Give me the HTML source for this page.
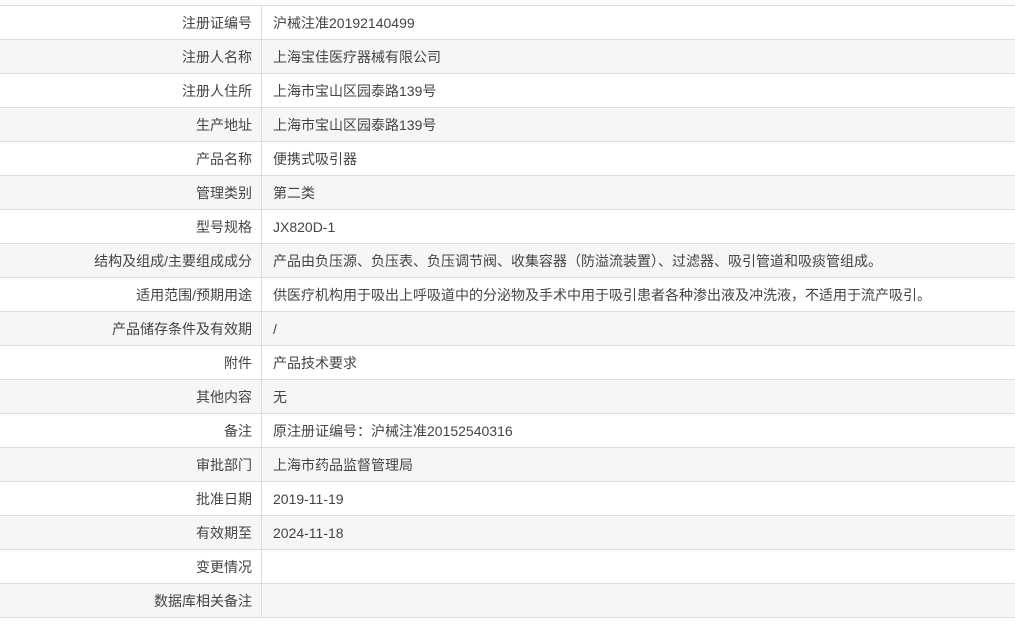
<!DOCTYPE html>
<html><head><meta charset="utf-8"><style>
body{margin:0;background:#fff;font-family:"Liberation Sans","Noto Sans CJK SC",sans-serif;font-size:14px;color:#444;}
table{position:absolute;left:0;top:5px;width:1015px;border-collapse:collapse;}
td{height:33px;border-top:1px solid #ddd;border-bottom:1px solid #ddd;padding:0;}
td.l{width:252px;text-align:right;padding-right:9px;border-right:1px solid #ddd;}
td.v{padding-left:11px;}
tr:nth-child(even) td{background:#f6f6f6;}
</style></head><body>
<table>
<tr><td class="l">注册证编号</td><td class="v">沪械注准20192140499</td></tr>
<tr><td class="l">注册人名称</td><td class="v">上海宝佳医疗器械有限公司</td></tr>
<tr><td class="l">注册人住所</td><td class="v">上海市宝山区园泰路139号</td></tr>
<tr><td class="l">生产地址</td><td class="v">上海市宝山区园泰路139号</td></tr>
<tr><td class="l">产品名称</td><td class="v">便携式吸引器</td></tr>
<tr><td class="l">管理类别</td><td class="v">第二类</td></tr>
<tr><td class="l">型号规格</td><td class="v">JX820D-1</td></tr>
<tr><td class="l">结构及组成/主要组成成分</td><td class="v">产品由负压源、负压表、负压调节阀、收集容器（防溢流装置）、过滤器、吸引管道和吸痰管组成。</td></tr>
<tr><td class="l">适用范围/预期用途</td><td class="v">供医疗机构用于吸出上呼吸道中的分泌物及手术中用于吸引患者各种渗出液及冲洗液，不适用于流产吸引。</td></tr>
<tr><td class="l">产品储存条件及有效期</td><td class="v">/</td></tr>
<tr><td class="l">附件</td><td class="v">产品技术要求</td></tr>
<tr><td class="l">其他内容</td><td class="v">无</td></tr>
<tr><td class="l">备注</td><td class="v">原注册证编号：沪械注准20152540316</td></tr>
<tr><td class="l">审批部门</td><td class="v">上海市药品监督管理局</td></tr>
<tr><td class="l">批准日期</td><td class="v">2019-11-19</td></tr>
<tr><td class="l">有效期至</td><td class="v">2024-11-18</td></tr>
<tr><td class="l">变更情况</td><td class="v"></td></tr>
<tr><td class="l">数据库相关备注</td><td class="v"></td></tr>
</table>
</body></html>
